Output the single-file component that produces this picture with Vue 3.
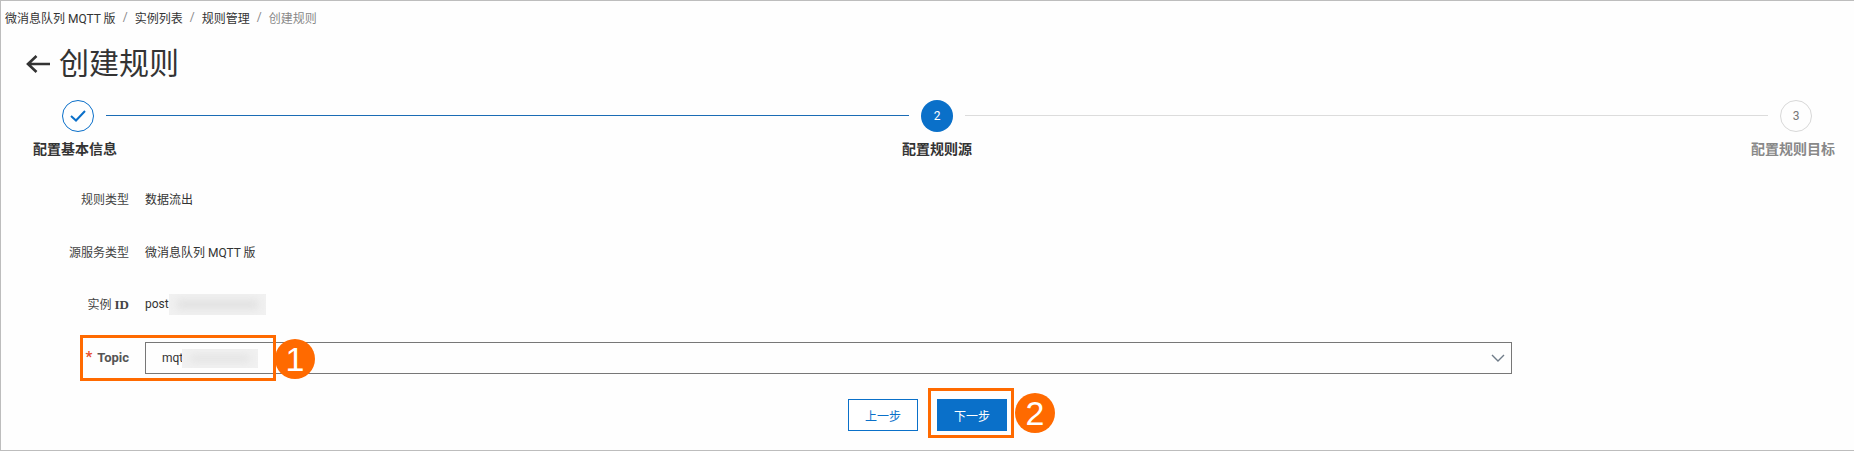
<script setup>
const fields = [
  { label: '规则类型', value: '数据流出' },
  { label: '源服务类型', value: '微消息队列 MQTT 版' },
]
</script>

<template>
  <div class="page">
    <nav class="crumbs">
      <span>微消息队列 MQTT 版</span><i>/</i>
      <span>实例列表</span><i>/</i>
      <span>规则管理</span><i>/</i>
      <span class="now">创建规则</span>
    </nav>
    <header class="head">
      <svg class="back" width="24" height="20" viewBox="0 0 24 20" fill="none" stroke="#333" stroke-width="2.6">
        <path d="M24 10H2M10.5 2L2 10l8.5 8" />
      </svg>
      <h1>创建规则</h1>
    </header>
    <div class="steps">
      <div class="step first">
        <span class="dot done">
          <svg width="16" height="12" viewBox="0 0 16 12" fill="none" stroke="#0a6fc9" stroke-width="2"><path d="M1 6l5 4.5L15 1" /></svg>
        </span>
        <b>配置基本信息</b>
      </div>
      <span class="line blue"></span>
      <div class="step">
        <span class="dot active">2</span>
        <b>配置规则源</b>
      </div>
      <span class="line"></span>
      <div class="step last">
        <span class="dot todo">3</span>
        <b>配置规则目标</b>
      </div>
    </div>
    <form class="form" @submit.prevent>
      <div v-for="f in fields" :key="f.label" class="row">
        <label>{{ f.label }}</label>
        <span>{{ f.value }}</span>
      </div>
      <div class="row">
        <label class="idlabel">实例 <span>ID</span></label>
        <span class="idval">post<em class="blur b1"></em></span>
      </div>
      <div class="row topic">
        <label><s>*</s> Topic</label>
        <div class="select">
          <span>mqt</span><em class="blur b2"></em>
          <svg class="chev" width="14" height="8" viewBox="0 0 14 8" fill="none" stroke="#6f7b88" stroke-width="1.4"><path d="M1 1l6 6 6-6" /></svg>
        </div>
        <span class="mark m1"></span>
        <span class="badge b-one">1</span>
      </div>
      <div class="actions">
        <button type="button" class="btn ghost">上一步</button>
        <span class="nextwrap">
          <button type="button" class="btn primary">下一步</button>
          <span class="mark m2"></span>
          <span class="badge b-two">2</span>
        </span>
      </div>
    </form>
  </div>
</template>

<style>
html, body { margin: 0; background: #fff; }
</style>

<style scoped>
.page {
  box-sizing: border-box;
  width: 1854px;
  height: 451px;
  border: 1px solid #bdbdbd;
  border-right: 0;
  background: #fefefe;
  font-family: Roboto, "Noto Sans CJK SC", sans-serif;
  font-size: 12px;
  color: #333;
  overflow: hidden;
}
.crumbs { display: flex; align-items: center; height: 16px; margin: 8px 0 0 4px; color: #333; }
.crumbs i { font-style: normal; color: #888; width: 19px; text-align: center; }
.crumbs .now { color: #888; }
.head { display: flex; align-items: center; margin: 19px 0 0 25px; height: 40px; gap: 9px; }
.head h1 { margin: 0; font-weight: 400; font-size: 30px; line-height: 40px; color: #333; }
.steps { display: flex; align-items: flex-start; margin: 16px -2px 0 17px; height: 81px; }
.step { display: flex; flex-direction: column; align-items: center; gap: 8px; width: 120px; flex: none; }
.step b { font-size: 14px; font-weight: 700; line-height: 18px; color: #333; white-space: nowrap; }
.step.first b, .step.last b { margin-left: -6px; }
.step.last b { color: #888; }
.dot { box-sizing: border-box; width: 32px; height: 32px; border-radius: 50%; display: flex; align-items: center; justify-content: center; font-size: 12px; }
.done { border: 1px solid #0a6fc9; }
.active { background: #0a70c9; color: #fff; }
.todo { border: 1px solid #d8d8d8; color: #777; }
.line { flex: 1; height: 1px; background: #dcdcdc; margin: 15px -32px 0; }
.line.blue { background: #1b6cb5; }
.row { display: flex; align-items: center; height: 36px; margin-bottom: 17px; position: relative; }
.row label { width: 144px; text-align: right; padding: 0 16px 2px 0; box-sizing: border-box; color: #444; flex: none; }
.row > span:not(.mark):not(.badge) { padding-bottom: 2px; }
.idlabel span { font-family: "Liberation Serif", serif; font-weight: 700; font-size: 13px; }
.idval { display: flex; align-items: center; }
.blur { display: block; position: relative; overflow: hidden; background: #f1f1f1; }
.blur::before { content: ""; position: absolute; inset: 7px 8px; background: #dcdcdc; filter: blur(4px); }
.b1 { width: 97px; height: 21px; }
.topic { margin-bottom: 0; }
.topic label { font-weight: 700; font-size: 13px; color: #555; }
.topic s { color: #e8502a; text-decoration: none; font-size: 15px; margin-right: 2px; }
.select { box-sizing: border-box; display: flex; align-items: center; width: 1367px; height: 32px; border: 1px solid #777; padding-left: 16px; position: relative; }
.select span { width: 20px; }
.b2 { width: 76px; height: 19px; }
.chev { position: absolute; right: 6px; top: 11px; }
.mark { position: absolute; border: 3px solid #ff6a00; box-sizing: border-box; }
.m1 { left: 79px; top: -5px; width: 196px; height: 46px; }
.badge { position: absolute; width: 40px; height: 40px; border-radius: 50%; background: #ff6a00; color: #fff; font-family: "Liberation Sans", sans-serif; font-size: 34px; line-height: 40px; text-align: center; }
.b-one { left: 274px; top: -1px; }
.actions { display: flex; justify-content: center; margin-top: 23px; gap: 19px; }
.btn { box-sizing: border-box; display: block; width: 70px; height: 32px; font: 12px Roboto, "Noto Sans CJK SC", sans-serif; padding: 0; }
.ghost { background: #fff; border: 1px solid #0a70c9; color: #0a70c9; }
.primary { background: #0a70c9; border: 0; color: #fff; }
.nextwrap { position: relative; display: block; height: 32px; }
.m2 { left: -9px; right: -7px; top: -11px; bottom: -7px; }
.b-two { left: 78px; top: -6px; }
</style>
